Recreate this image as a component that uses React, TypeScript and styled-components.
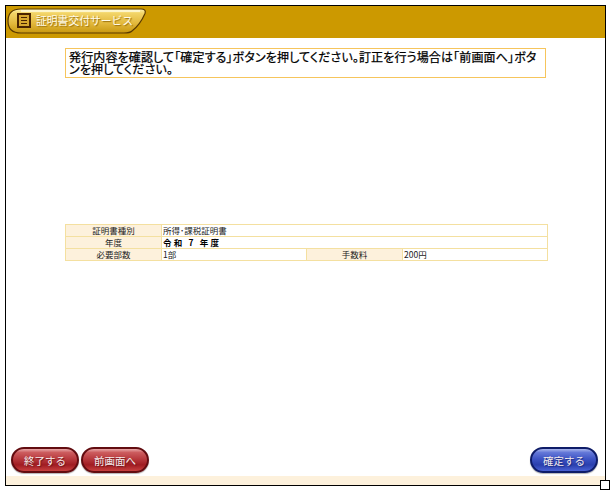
import React, {FC} from "react";
import styled, {createGlobalStyle} from "styled-components";

const GlobalStyle = createGlobalStyle`
  html, body {
    margin: 0;
    padding: 0;
    background: #fff;
  }
  body {
    font-family: "Noto Sans CJK JP", "Liberation Sans", sans-serif;
  }
`;

const Frame = styled.div`
  position: relative;
  box-sizing: border-box;
  width: 601px;
  height: 481px;
  margin: 5px 0 0 5px;
  border: 1px solid #000;
  display: flex;
  flex-direction: column;
`;

const Header = styled.header`
  box-sizing: border-box;
  height: 32px;
  flex: none;
  background: #cc9900;
  display: flex;
  align-items: center;
  padding: 0 0 2px 1px;
`;

const TitleBadge = styled.div`
  position: relative;
  width: 140px;
  height: 26px;
`;

const TitleShape = styled.svg`
  display: block;
`;

const TitleIcon = styled.svg`
  position: absolute;
  left: 10px;
  top: 5px;
`;

const TitleText = styled.span`
  position: absolute;
  left: 29px;
  top: 5px;
  font-size: 10.8px;
  line-height: 15px;
  color: #fffbe8;
  text-shadow: 1px 1px 1px #9a700c;
  white-space: nowrap;
`;

const Main = styled.main`
  flex: 1;
  padding: 10px 58px 0 59px;
`;

const Notice = styled.div`
  box-sizing: border-box;
  width: 481px;
  height: 30px;
  border: 1px solid #f6c55c;
  padding: 2px 4px 0 3px;
  font-size: 12px;
  line-height: 12px;
  letter-spacing: 0.14px;
  color: #000;
  font-feature-settings: "palt";
  -webkit-text-stroke: 0.25px #000;
`;

const InfoTable = styled.table`
  width: 483px;
  margin-top: 146px;
  border-collapse: collapse;
  table-layout: fixed;
  font-size: 8.5px;
  color: #222;
`;

const LabelCell = styled.td`
  height: 11px;
  padding: 0;
  background: #fdf1dc;
  border: 1px solid #f4e0a0;
  text-align: center;
  line-height: 11px;
`;

const ValueCell = styled.td<{$strong?: boolean}>`
  height: 11px;
  padding: 0 0 0 1px;
  background: #fff;
  border: 1px solid #f4e0a0;
  line-height: 11px;
  color: ${(props) => (props.$strong ? "#000" : "#222")};
  font-weight: ${(props) => (props.$strong ? 700 : 400)};
  letter-spacing: ${(props) => (props.$strong ? "2.2px" : "0")};
`;

const Footer = styled.div`
  flex: none;
  height: 35px;
  box-sizing: border-box;
  padding: 6px 7px 0 5px;
  display: flex;
  align-items: flex-start;
  gap: 2px;
`;

const Pill = styled.button<{$blue?: boolean}>`
  box-sizing: border-box;
  width: 68px;
  height: 26px;
  padding: 0;
  border-radius: 13px;
  border: 2px solid ${(props) => (props.$blue ? "#0e1c68" : "#620c10")};
  background: ${(props) =>
    props.$blue
      ? "linear-gradient(#a9b6ec 0%, #6478d8 16%, #3e54c4 45%, #2a3fae 72%, #4a62d4 100%)"
      : "linear-gradient(#e8a8a8 0%, #cc5c5e 16%, #b83a3e 45%, #a01c22 72%, #c8403f 100%)"};
  box-shadow: 0 1px 1px rgba(0, 0, 0, 0.3);
  color: #f6ecec;
  text-shadow: 1px 1px 1px ${(props) => (props.$blue ? "#182a80" : "#701418")};
  font-family: inherit;
  font-size: 10.5px;
  line-height: 21px;
  margin-left: ${(props) => (props.$blue ? "auto" : "0")};
`;

const BottomStrip = styled.div`
  flex: none;
  height: 9px;
  background: #fdf1dc;
`;

const ResizeHandle = styled.div`
  position: fixed;
  z-index: 2;
  left: 600px;
  top: 480px;
  box-sizing: border-box;
  width: 10px;
  height: 10px;
  background: #fff;
  border: 1px solid #000;
`;

const App: FC = () => {
    return (
        <>
            <GlobalStyle/>
            <Frame>
                <Header>
                    <TitleBadge>
                        <TitleShape width="140" height="26" viewBox="0 0 140 26">
                            <defs>
                                <linearGradient id="badge" x1="0" y1="0" x2="0" y2="1">
                                    <stop offset="0" stopColor="#fff4b0"/>
                                    <stop offset="0.18" stopColor="#f2d468"/>
                                    <stop offset="0.6" stopColor="#e2b83c"/>
                                    <stop offset="1" stopColor="#c8980f"/>
                                </linearGradient>
                            </defs>
                            <path
                                d="M14 1 H134 Q139.5 1 138 5.5 Q133 17 125 23 Q123 25 117 25 H14 Q1 25 1 13 Q1 1 14 1 Z"
                                fill="url(#badge)"
                                stroke="#5a3a00"
                                strokeWidth="1.2"
                            />
                            <path d="M14 3 H133" stroke="#fffbe0" strokeWidth="1.4"/>
                        </TitleShape>
                        <TitleIcon width="14" height="15" viewBox="0 0 14 15">
                            <rect x="1" y="1" width="12" height="13" fill="#d8a830" stroke="#4a2400" strokeWidth="2"/>
                            <path d="M4 4.5 H10 M4 7.5 H10 M4 10.5 H10" stroke="#4a2400" strokeWidth="1.2"/>
                        </TitleIcon>
                        <TitleText>証明書交付サービス</TitleText>
                    </TitleBadge>
                </Header>
                <Main>
                    <Notice>
                        発行内容を確認して「確定する」ボタンを押してください。訂正を行う場合は「前画面へ」ボタンを押してください。
                    </Notice>
                    <InfoTable>
                        <colgroup>
                            <col style={{width: 96}}/>
                            <col style={{width: 145}}/>
                            <col style={{width: 96}}/>
                            <col/>
                        </colgroup>
                        <tbody>
                            <tr>
                                <LabelCell>証明書種別</LabelCell>
                                <ValueCell colSpan={3}>所得･課税証明書</ValueCell>
                            </tr>
                            <tr>
                                <LabelCell>年度</LabelCell>
                                <ValueCell colSpan={3} $strong>令和 7 年度</ValueCell>
                            </tr>
                            <tr>
                                <LabelCell>必要部数</LabelCell>
                                <ValueCell>1部</ValueCell>
                                <LabelCell>手数料</LabelCell>
                                <ValueCell>200円</ValueCell>
                            </tr>
                        </tbody>
                    </InfoTable>
                </Main>
                <Footer>
                    <Pill>終了する</Pill>
                    <Pill>前画面へ</Pill>
                    <Pill $blue>確定する</Pill>
                </Footer>
                <BottomStrip/>
            </Frame>
            <ResizeHandle/>
        </>
    );
};

export default App;
